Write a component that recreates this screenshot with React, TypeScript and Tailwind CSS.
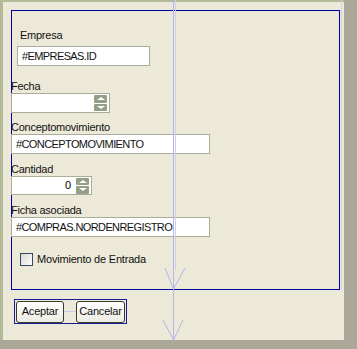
const font = { fontFamily: '"Liberation Sans", Arial, sans-serif' }

function Spinner() {
  return (
    <div className="flex flex-col w-[13px] h-[16px] mr-[2px] gap-px">
      <div className="flex-1 bg-[#93a087] rounded-[1px] flex items-center justify-center">
        <div className="w-0 h-0 border-l-[4px] border-r-[4px] border-b-[3px] border-l-transparent border-r-transparent border-b-white" />
      </div>
      <div className="flex-1 bg-[#93a087] rounded-[1px] flex items-center justify-center">
        <div className="w-0 h-0 border-l-[4px] border-r-[4px] border-t-[3px] border-l-transparent border-r-transparent border-t-white" />
      </div>
    </div>
  )
}

function Field({ value, width }: { value: string; width: string }) {
  return (
    <div className={`h-[20px] ${width} bg-white border border-[#a9ad95] flex items-center pl-[4px] text-[11px] tracking-[-0.6px] text-[#111]`}>
      {value}
    </div>
  )
}

function Label({ text }: { text: string }) {
  return <div className="h-[13px] leading-[13px] text-[11px] tracking-[-0.25px] text-[#111]">{text}</div>
}

export default function App() {
  return (
    <div className="relative w-[357px] h-[349px] bg-[#aca899] overflow-hidden" style={font}>
      <div className="w-[344px] h-[340px] bg-[#ece9d8] border-t-[2px] border-l-[3px] border-[#b3ba97] pl-[8px] pt-[8px]">
        <div className="w-[329px] h-[280px] border border-[#0000a8]">
          <div className="-ml-px">
            <div className="mt-[18px] ml-[9px]">
              <Label text="Empresa" />
            </div>
            <div className="mt-[4px] ml-[6px]">
              <Field value="#EMPRESAS.ID" width="w-[133px]" />
            </div>

            <div className="mt-[14px]">
              <Label text="Fecha" />
              <div className="h-[20px] w-[99px] bg-white border border-[#a9ad95] flex items-center justify-end">
                <Spinner />
              </div>
            </div>

            <div className="mt-[8px]">
              <Label text="Conceptomovimiento" />
              <Field value="#CONCEPTOMOVIMIENTO" width="w-[199px]" />
            </div>

            <div className="mt-[9px]">
              <Label text="Cantidad" />
              <div className="h-[19px] w-[81px] bg-white border border-[#a9ad95] flex items-center justify-end text-[11px]">
                <span className="mr-[5px]">0</span>
                <Spinner />
              </div>
            </div>

            <div className="mt-[9px]">
              <Label text="Ficha asociada" />
              <Field value="#COMPRAS.NORDENREGISTRO" width="w-[199px]" />
            </div>

            <div className="mt-[14px] ml-[9px] flex items-center gap-[4px] text-[11px] tracking-[-0.2px] text-[#111]">
              <div className="w-[13px] h-[13px] border border-[#2f4a6a] bg-gradient-to-br from-[#d8d8d0] to-white" />
              <span>Movimiento de Entrada</span>
            </div>
          </div>
        </div>

        <div className="mt-[9px] ml-[3px] w-[113px] h-[25px] border border-[#1a1a9a] flex items-center justify-between px-px">
          <button className="h-[22px] w-[48px] rounded-[3px] border border-[#3b3b2a] bg-gradient-to-b from-white to-[#ecebe2] text-[11px] tracking-[-0.2px] text-[#111]">
            Aceptar
          </button>
          <div className="flex-1 h-px bg-[#c8c8e8]" />
          <button className="h-[22px] w-[49px] rounded-[3px] border border-[#3b3b2a] bg-gradient-to-b from-white to-[#ecebe2] text-[11px] tracking-[-0.2px] text-[#111]">
            Cancelar
          </button>
        </div>
      </div>

      <svg className="absolute inset-0 pointer-events-none" width="357" height="349">
        <line x1="173.5" y1="0" x2="173.5" y2="340" stroke="#b4b4ee" strokeWidth="1" />
        <line x1="175.5" y1="0" x2="175.5" y2="270" stroke="#cfcff2" strokeWidth="1" />
        <polyline points="165,268 173.5,289 185,268" fill="none" stroke="#b4b4ee" strokeWidth="1" />
        <polyline points="163,320 173.5,340 183,320" fill="none" stroke="#b4b4ee" strokeWidth="1" />
        <line x1="341.5" y1="0" x2="341.5" y2="290" stroke="#cfcff2" strokeWidth="1" />
      </svg>
    </div>
  )
}
